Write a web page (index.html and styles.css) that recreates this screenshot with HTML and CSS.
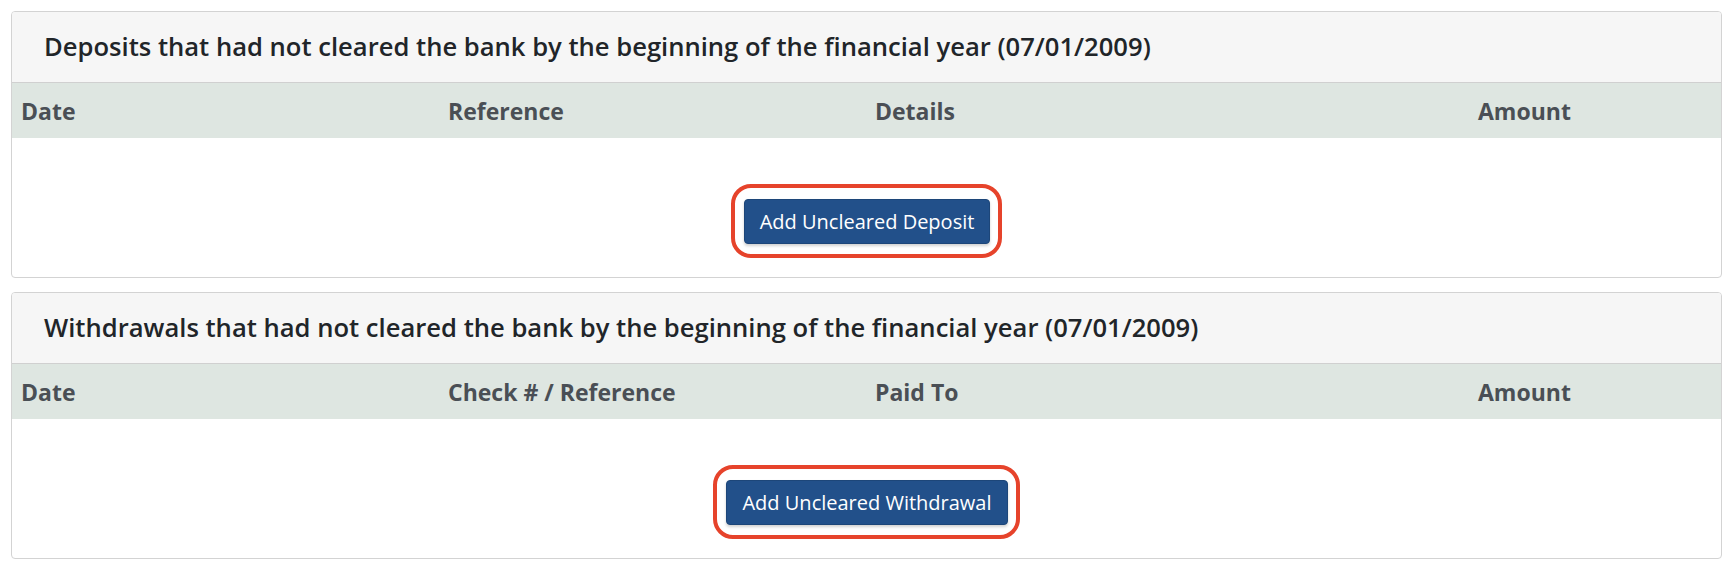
FILE: index.html
```html
<!DOCTYPE html>
<html>
<head>
<meta charset="utf-8">
<link rel="stylesheet" href="styles.css">
</head>
<body>
<div class="page">
  <section class="card">
    <div class="card-header">Deposits that had not cleared the bank by the beginning of the financial year (07/01/2009)</div>
    <div class="table-head">
      <div class="th">Date</div>
      <div class="th">Reference</div>
      <div class="th">Details</div>
      <div class="th">Amount</div>
    </div>
    <div class="card-body">
      <div class="highlight"><button class="btn">Add Uncleared Deposit</button></div>
    </div>
  </section>
  <section class="card">
    <div class="card-header">Withdrawals that had not cleared the bank by the beginning of the financial year (07/01/2009)</div>
    <div class="table-head">
      <div class="th">Date</div>
      <div class="th">Check # / Reference</div>
      <div class="th">Paid To</div>
      <div class="th">Amount</div>
    </div>
    <div class="card-body">
      <div class="highlight"><button class="btn">Add Uncleared Withdrawal</button></div>
    </div>
  </section>
</div>
</body>
</html>
```
FILE: styles.css
```css
* { box-sizing: border-box; }
html, body { margin: 0; padding: 0; background: #ffffff; }
body { font-family: "Open Sans", "Liberation Sans", sans-serif; }
.page {
  padding: 11px 12px 11px 11px;
  display: flex;
  flex-direction: column;
  gap: 14px;
}
.card {
  border: 1px solid #d3d3d3;
  border-radius: 4px;
  background: #fff;
  overflow: hidden;
}
.card-header {
  background: #f6f6f6;
  height: 71px;
  border-bottom: 1px solid #d0d0d0;
  display: flex;
  align-items: center;
  padding-left: 32px;
  padding-bottom: 2px;
  font-size: 25.6px;
  font-weight: 600;
  color: #212529;
}
.table-head {
  display: grid;
  grid-template-columns: 427px 427px 603px 1fr;
  background: #dee6e1;
  height: 55px;
  align-items: center;
}
.th {
  padding-left: 9px;
  padding-top: 1px;
  font-size: 23px;
  font-weight: 700;
  color: #4a4f55;
}
.card-body {
  display: flex;
  justify-content: center;
  padding: 46px 0 19px;
}
.highlight {
  border: 4px solid #e6432b;
  border-radius: 20px;
  padding: 11px 8px 10px 9px;
}
.btn {
  display: block;
  font-family: "Open Sans", "Liberation Sans", sans-serif;
  font-size: 20px;
  color: #ffffff;
  background: #22508a;
  border: 1px solid #1d4679;
  border-radius: 4px;
  height: 45px;
  padding: 0 15px;
  box-shadow: 0 2px 3px rgba(0,0,0,0.18);
}
```
